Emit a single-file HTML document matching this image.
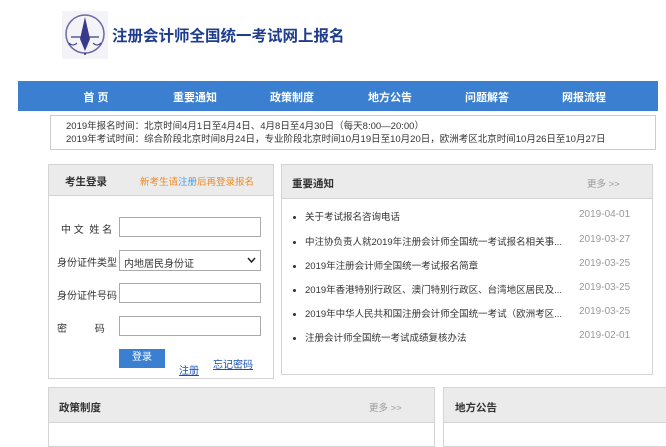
<!DOCTYPE html><html><head><meta charset="utf-8"><style>
*{margin:0;padding:0;box-sizing:border-box}
body{width:666px;height:435px;overflow:hidden;background:#fff;font-family:"Liberation Sans","Noto Sans CJK SC",sans-serif;font-size:10px;color:#333;position:relative}
.a{position:absolute}
.nav{left:18px;top:81px;width:640px;height:30px;background:#3a7fd0}
.nav span{position:absolute;top:8px;color:#fff;font-weight:bold;font-size:11px;transform:translateX(-50%);white-space:nowrap}
.box{border:1px solid #d4d4d4;background:#fff}
.hd{background:#ebebeb;border-bottom:1px solid #d4d4d4}
.inp{border:1px solid #aaa;width:142px;height:20px;left:119px;background:#fff}
.lab{font-size:10px;color:#333;white-space:nowrap}
.li{left:293px;font-size:9.5px;white-space:nowrap}
.li b{display:inline-block;width:3px;height:3px;background:#333;border-radius:50%;margin-right:9px;vertical-align:middle}
.dt{left:579px;color:#999;font-size:10px}
</style></head><body>
<svg class="a" style="left:62px;top:11px" width="46" height="48" viewBox="0 0 46 48"><rect width="46" height="48" fill="#f4f4f8"/><circle cx="23" cy="23" r="19" fill="none" stroke="#6a6aa8" stroke-width="1.5"/><path d="M23 6 L28 28 L23 40 L18 28Z" fill="#3a3a8a"/><path d="M9 26 H37" stroke="#3a3a8a" stroke-width="1.3"/><path d="M7 32 Q11 36 15 32 M31 32 Q35 36 39 32" stroke="#3a3a8a" fill="none"/><circle cx="23" cy="43" r="1" fill="#333"/></svg>
<div class="a" style="left:112px;top:24px;font-size:15.5px;font-weight:bold;color:#1e3d8f;white-space:nowrap">注册会计师全国统一考试网上报名</div>
<div class="a nav"><span style="left:78px">首 页</span><span style="left:177px">重要通知</span><span style="left:274px">政策制度</span><span style="left:372px">地方公告</span><span style="left:469px">问题解答</span><span style="left:566px">网报流程</span></div>
<div class="a box" style="left:50px;top:115px;width:606px;height:35px;border-color:#ccc"></div>
<div class="a" style="left:66px;top:120px;font-size:9.5px;line-height:13px;white-space:nowrap">2019年报名时间：北京时间4月1日至4月4日、4月8日至4月30日（每天8:00—20:00）<br>2019年考试时间：综合阶段北京时间8月24日，专业阶段北京时间10月19日至10月20日，欧洲考区北京时间10月26日至10月27日</div>

<div class="a box" style="left:48px;top:164px;width:226px;height:215px"></div>
<div class="a hd" style="left:49px;top:165px;width:224px;height:31px"></div>
<div class="a" style="left:65px;top:174px;font-size:10.5px;font-weight:bold">考生登录</div>
<div class="a" style="left:140px;top:174px;font-size:9.5px;color:#f08a24;white-space:nowrap">新考生请<span style="color:#4a9de0">注册</span>后再登录报名</div>
<div class="a lab" style="left:61px;top:221px">中 文&nbsp;&nbsp;姓 名</div>
<div class="a inp" style="top:217px"></div>
<div class="a lab" style="left:57px;top:254px">身份证件类型</div>
<div class="a inp" style="top:250px;height:21px"><span class="a" style="left:4px;top:4px;font-size:10px">内地居民身份证</span><svg class="a" style="right:4px;top:6px" width="9" height="7"><path d="M1 1 L4.5 5 L8 1" stroke="#222" stroke-width="1.5" fill="none"/></svg></div>
<div class="a lab" style="left:57px;top:287px">身份证件号码</div>
<div class="a inp" style="top:283px"></div>
<div class="a lab" style="left:57px;top:320px">密&nbsp;&nbsp;&nbsp;&nbsp;&nbsp;&nbsp;&nbsp;&nbsp;&nbsp;&nbsp;码</div>
<div class="a inp" style="top:316px"></div>
<div class="a" style="left:119px;top:349px;width:46px;height:19px;background:#3a7fd0;color:#fff;text-align:center;line-height:17px;font-size:10px">登录</div>
<div class="a" style="left:179px;top:362px;color:#1a4fb8;text-decoration:underline">注册</div>
<div class="a" style="left:213px;top:356px;color:#1a4fb8;text-decoration:underline">忘记密码</div>

<div class="a box" style="left:281px;top:164px;width:372px;height:211px"></div>
<div class="a hd" style="left:282px;top:165px;width:370px;height:34px"></div>
<div class="a" style="left:292px;top:176px;font-size:10.5px;font-weight:bold">重要通知</div>
<div class="a" style="left:587px;top:176px;color:#999;font-size:9.5px">更多 &gt;&gt;</div>
<div class="a li" style="top:209px"><b></b>关于考试报名咨询电话</div><div class="a dt" style="top:209px">2019-04-01</div>
<div class="a li" style="top:234px"><b></b>中注协负责人就2019年注册会计师全国统一考试报名相关事...</div><div class="a dt" style="top:234px">2019-03-27</div>
<div class="a li" style="top:258px"><b></b>2019年注册会计师全国统一考试报名简章</div><div class="a dt" style="top:258px">2019-03-25</div>
<div class="a li" style="top:282px"><b></b>2019年香港特别行政区、澳门特别行政区、台湾地区居民及...</div><div class="a dt" style="top:282px">2019-03-25</div>
<div class="a li" style="top:306px"><b></b>2019年中华人民共和国注册会计师全国统一考试（欧洲考区...</div><div class="a dt" style="top:306px">2019-03-25</div>
<div class="a li" style="top:330px"><b></b>注册会计师全国统一考试成绩复核办法</div><div class="a dt" style="top:330px">2019-02-01</div>

<div class="a box" style="left:48px;top:387px;width:387px;height:60px"></div>
<div class="a hd" style="left:49px;top:388px;width:385px;height:35px"></div>
<div class="a" style="left:59px;top:400px;font-size:10.5px;font-weight:bold">政策制度</div>
<div class="a" style="left:369px;top:400px;color:#999;font-size:9.5px">更多 &gt;&gt;</div>
<div class="a box" style="left:443px;top:387px;width:230px;height:60px"></div>
<div class="a hd" style="left:444px;top:388px;width:228px;height:35px"></div>
<div class="a" style="left:455px;top:400px;font-size:10.5px;font-weight:bold">地方公告</div>
</body></html>
